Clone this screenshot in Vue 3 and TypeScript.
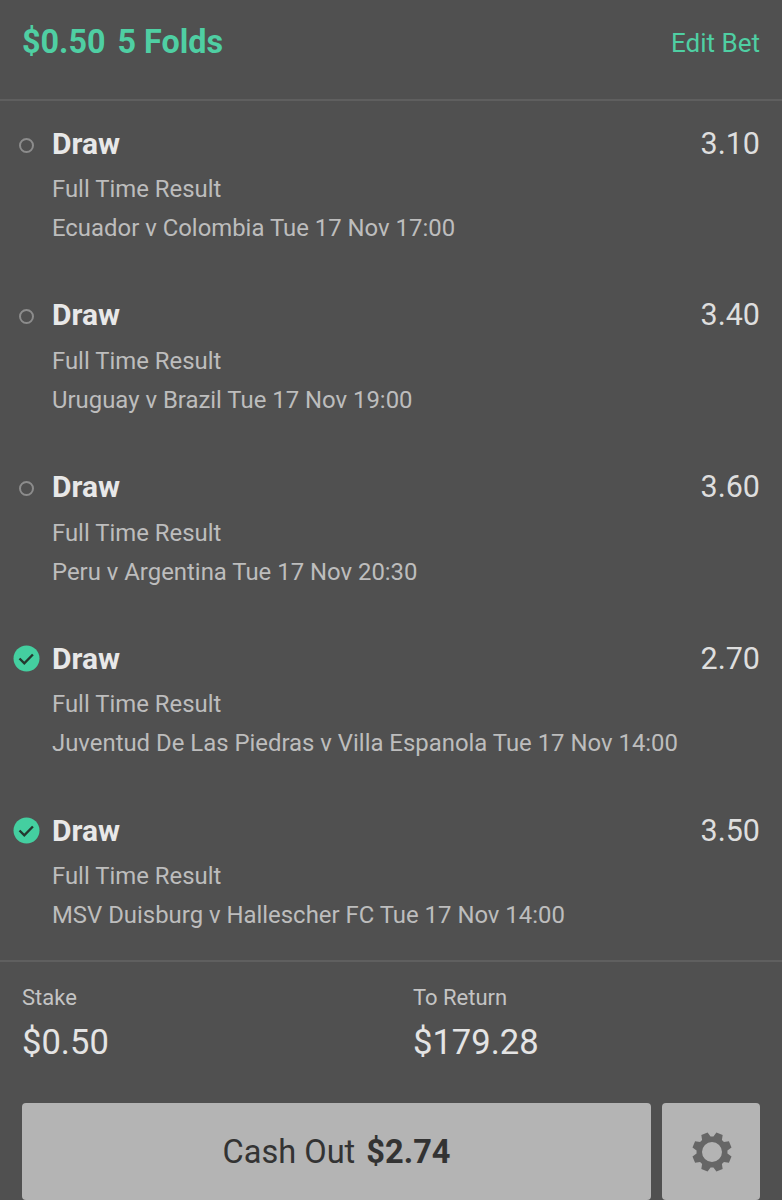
<script setup lang="ts">
interface Leg {
  odds: string
  match: string
  won: boolean
}

const legs: Leg[] = [
  { odds: '3.10', match: 'Ecuador v Colombia Tue 17 Nov 17:00', won: false },
  { odds: '3.40', match: 'Uruguay v Brazil Tue 17 Nov 19:00', won: false },
  { odds: '3.60', match: 'Peru v Argentina Tue 17 Nov 20:30', won: false },
  { odds: '2.70', match: 'Juventud De Las Piedras v Villa Espanola Tue 17 Nov 14:00', won: true },
  { odds: '3.50', match: 'MSV Duisburg v Hallescher FC Tue 17 Nov 14:00', won: true }
]

// 8 tooth cog, hole cut with evenodd
const gearPath = (() => {
  const teeth = 8
  const outer = 20
  const root = 15.5
  let d = ''
  for (let i = 0; i < teeth; i++) {
    const mid = ((i + 0.5) / teeth) * Math.PI * 2
    const pts: [number, number][] = [
      [root, mid - 0.3],
      [outer, mid - 0.17],
      [outer, mid + 0.17],
      [root, mid + 0.3]
    ]
    pts.forEach(([r, a], j) => {
      const x = (r * Math.cos(a)).toFixed(2)
      const y = (r * Math.sin(a)).toFixed(2)
      d += (i === 0 && j === 0 ? 'M' : 'L') + x + ' ' + y + ' '
    })
  }
  return d + 'Z M10 0 A10 10 0 1 0 -10 0 A10 10 0 1 0 10 0 Z'
})()
</script>

<template>
  <div class="slip">
    <header class="head">
      <div class="title"><span>$0.50</span><span>5 Folds</span></div>
      <span class="edit">Edit Bet</span>
    </header>

    <ul class="legs">
      <li v-for="leg in legs" :key="leg.match" class="leg">
        <div class="status">
          <svg v-if="leg.won" class="tick" width="27" height="27" viewBox="0 0 27 27">
            <circle cx="13.5" cy="13.5" r="13" fill="#44cfa0" />
            <path d="M6.5 13.5l4.8 4.8 8.6-8.8" fill="none" stroke="#24382f" stroke-width="2.4" />
          </svg>
          <span v-else class="dot"></span>
        </div>
        <div class="info">
          <div class="top">
            <span class="pick">Draw</span>
            <span class="odds">{{ leg.odds }}</span>
          </div>
          <div class="market">Full Time Result</div>
          <div class="match">{{ leg.match }}</div>
        </div>
      </li>
    </ul>

    <section class="summary">
      <div class="col">
        <div class="label">Stake</div>
        <div class="value">$0.50</div>
      </div>
      <div class="col">
        <div class="label">To Return</div>
        <div class="value">$179.28</div>
      </div>
    </section>

    <div class="actions">
      <button class="cash">Cash Out <b>$2.74</b></button>
      <button class="cog" aria-label="Settings">
        <svg width="44" height="44" viewBox="-22 -22 44 44">
          <path :d="gearPath" fill="#666" fill-rule="evenodd" />
        </svg>
      </button>
    </div>
  </div>
</template>

<style scoped>
.slip {
  width: 782px;
  height: 1200px;
  overflow: hidden;
  background: #505050;
  font-family: Roboto, "Liberation Sans", sans-serif;
  display: flex;
  flex-direction: column;
}

.head {
  height: 99px;
  box-sizing: content-box;
  border-bottom: 2px solid #5f5f5f;
  padding: 0 22px;
  display: flex;
  justify-content: space-between;
  align-items: flex-start;
  color: #4fcfa3;
}

.title {
  display: flex;
  gap: 12px;
  font-size: 32.3px;
  font-weight: 700;
  line-height: 38px;
  margin-top: 23px;
}

.edit {
  font-size: 26px;
  line-height: 30px;
  margin-top: 28px;
}

.legs {
  list-style: none;
  margin: 0;
  padding: 0;
}

.leg {
  height: 171.75px;
  display: flex;
  box-sizing: border-box;
  padding-top: 24px;
}

.status {
  width: 52px;
  height: 36px;
  flex: none;
  display: flex;
  align-items: center;
  justify-content: center;
  box-sizing: border-box;
}

.tick {
  display: block;
  margin-top: 1px;
}

.dot {
  width: 15px;
  height: 15px;
  margin-top: 4px;
  margin-left: 1px;
  box-sizing: border-box;
  border: 2px solid #8c8c8c;
  border-radius: 50%;
}

.info {
  flex: 1;
  padding-right: 22px;
}

.top {
  display: flex;
  justify-content: space-between;
  align-items: center;
  height: 36px;
}

.pick {
  font-size: 30px;
  font-weight: 700;
  color: #e8e8e8;
}

.odds {
  font-size: 30.5px;
  color: #dedede;
}

.market,
.match {
  font-size: 23.9px;
  line-height: 39px;
  color: #bdbdbd;
}

.market {
  margin-top: 9px;
}

.summary {
  border-top: 2px solid #5f5f5f;
  margin-top: 0.25px;
  padding: 23px 22px 0;
  display: flex;
  height: 143px;
  box-sizing: border-box;
  flex: none;
}

.col {
  width: 391px;
  flex: none;
}

.label {
  font-size: 22px;
  line-height: 26px;
  color: #c4c4c4;
}

.value {
  font-size: 34.6px;
  line-height: 42px;
  margin-top: 10px;
  color: #e4e4e4;
}

.actions {
  display: flex;
  gap: 11px;
  padding: 0 22px;
  height: 97px;
  flex: none;
}

.actions button {
  border: none;
  border-radius: 4px;
  background: #b4b4b4;
  color: #333;
  font-family: inherit;
  height: 97px;
  padding: 0;
}

.actions .cash {
  width: 629px;
  font-size: 32.6px;
}

.cash b {
  margin-left: 3px;
}

.cog {
  width: 98px;
  display: flex;
  align-items: center;
  justify-content: center;
}

.cog svg {
  margin-left: 2px;
  margin-top: 1px;
}
</style>
